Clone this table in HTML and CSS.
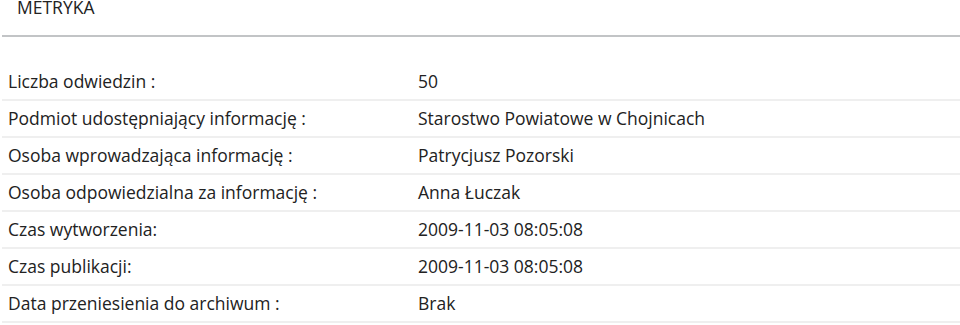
FILE: index.html
```html
<!DOCTYPE html>
<html lang="pl">
<head>
<meta charset="utf-8">
<link rel="stylesheet" href="styles.css">
</head>
<body>
<section class="metryka">
  <h2 class="title">METRYKA</h2>
  <div class="table">
    <div class="row"><div class="label">Liczba odwiedzin :</div><div class="value">50</div></div>
    <div class="row"><div class="label">Podmiot udostępniający informację :</div><div class="value">Starostwo Powiatowe w Chojnicach</div></div>
    <div class="row"><div class="label">Osoba wprowadzająca informację :</div><div class="value">Patrycjusz Pozorski</div></div>
    <div class="row"><div class="label">Osoba odpowiedzialna za informację :</div><div class="value">Anna Łuczak</div></div>
    <div class="row"><div class="label">Czas wytworzenia:</div><div class="value">2009-11-03 08:05:08</div></div>
    <div class="row"><div class="label">Czas publikacji:</div><div class="value">2009-11-03 08:05:08</div></div>
    <div class="row"><div class="label">Data przeniesienia do archiwum :</div><div class="value">Brak</div></div>
  </div>
</section>
</body>
</html>
```
FILE: styles.css
```css
html, body {
  margin: 0;
  padding: 0;
  background: #fff;
}
body {
  font-family: "Open Sans", "DejaVu Sans", sans-serif;
  font-size: 17.5px;
  line-height: 24px;
  color: #222;
  overflow: hidden;
}
.metryka {
  margin: -5px 0 0 2px;
}
.title {
  margin: 0;
  padding: 0 0 0 15px;
  font-size: 17.5px;
  font-weight: 400;
  line-height: 24px;
  height: 42px;
  border-bottom: 2px solid #c2c4c6;
  box-sizing: border-box;
}
.table {
  margin-top: 27px;
}
.row {
  display: grid;
  grid-template-columns: 410px 1fr;
  padding: 5px 0 6px 6px;
  border-bottom: 2px solid #efefef;
}
```
